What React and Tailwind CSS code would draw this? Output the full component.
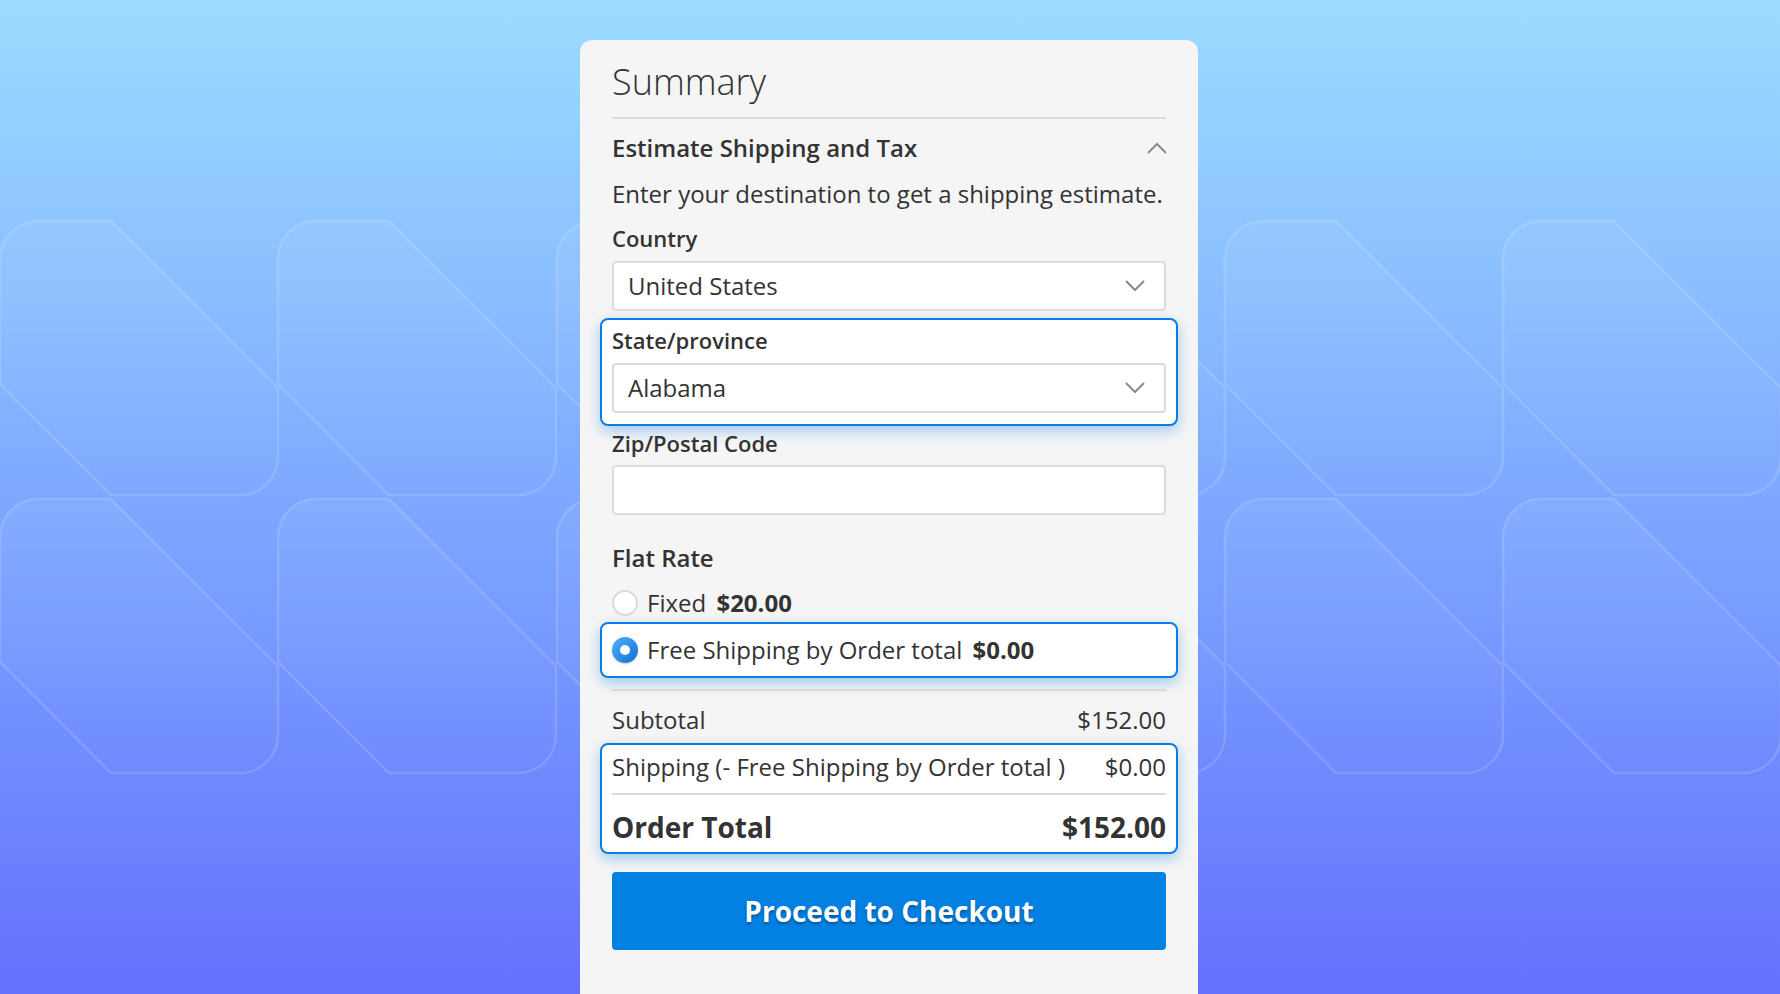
import React from 'react'

const LEFT_TILES = [0, 278, 557]
const RIGHT_TILES = [947, 1225, 1503]
const ROWS = [221, 499]

function tilePath(x, y, w, h = 274, a = 111, r = 38) {
  return `M${x} ${y + r}A${r} ${r} 0 0 1 ${x + r} ${y}L${x + a} ${y}L${x + w} ${y + w - a}L${x + w} ${y + h - r}A${r} ${r} 0 0 1 ${x + w - r} ${y + h}L${x + a} ${y + h}L${x} ${y + h - a}Z`
}

function Backdrop() {
  const tiles = []
  ROWS.forEach((y) => {
    LEFT_TILES.forEach((x) => tiles.push(tilePath(x, y, 278)))
    RIGHT_TILES.forEach((x) => tiles.push(tilePath(x, y, 278)))
  })
  return (
    <svg className="absolute inset-0" width="1780" height="994" viewBox="0 0 1780 994">
      <defs>
        <linearGradient id="tileFill" x1="0" y1="0" x2="0" y2="1">
          <stop offset="0" stopColor="#ffffff" stopOpacity="0.06" />
          <stop offset="1" stopColor="#ffffff" stopOpacity="0" />
        </linearGradient>
      </defs>
      {tiles.map((d, i) => (
        <path key={i} d={d} fill="url(#tileFill)" stroke="#ffffff" strokeOpacity="0.14" strokeWidth="2.5" />
      ))}
    </svg>
  )
}

function Chevron({ up }) {
  return (
    <svg width="20" height="12" viewBox="0 0 20 12" fill="none">
      <path
        d={up ? 'M1 11L10 2L19 11' : 'M1 1L10 10L19 1'}
        stroke="#8a8a8a"
        strokeWidth="2"
      />
    </svg>
  )
}

function Select({ value }) {
  return (
    <div className="flex items-center justify-between h-[50px] bg-white border-2 border-[#dcdcdc] rounded-[4px] pl-[14px] pr-[19px]">
      <span className="text-[24px] leading-[32px]">{value}</span>
      <Chevron />
    </div>
  )
}

function Label({ children }) {
  return <div className="text-[22px] font-semibold leading-[30px]">{children}</div>
}

const focusBox = 'bg-white border-2 border-[#0a7de3] rounded-[8px] -mx-3 px-[10px] shadow-[0_5px_14px_rgba(10,125,227,0.35)]'

export default function App() {
  return (
    <div className="relative w-full h-[994px] overflow-hidden bg-gradient-to-b from-[#9ddcff] to-[#6570fc] font-['Open_Sans','Noto_Sans',sans-serif] text-[#333333]">
      <Backdrop />

      <div className="relative flex justify-center pt-[40px]">
        <div className="w-[618px] mr-[2px] h-[954px] bg-[#f5f5f5] rounded-t-[12px] px-8 pt-5 flex flex-col">

          {/* ── Title ─────────────────────────── */}
          <h1 className="text-[36px] font-light leading-[43px]">Summary</h1>
          <div className="mt-[14px] h-[2px] bg-[#dadada]" />

          {/* ── Estimate block ────────────────── */}
          <div className="mt-[13px] h-[32px] flex items-center justify-between">
            <span className="text-[24px] font-semibold">Estimate Shipping and Tax</span>
            <span className="-mr-[1px]">
              <Chevron up />
            </span>
          </div>
          <p className="mt-[14px] text-[24px] leading-[32px] whitespace-nowrap">
            Enter your destination to get a shipping estimate.
          </p>

          <div className="mt-[13px]">
            <Label>Country</Label>
          </div>
          <div className="mt-[8px]">
            <Select value="United States" />
          </div>

          <div className={`mt-[7px] pt-[5px] pb-[11px] ${focusBox}`}>
            <Label>State/province</Label>
            <div className="mt-[8px]">
              <Select value="Alabama" />
            </div>
          </div>

          <div className="mt-[2px]">
            <Label>Zip/Postal Code</Label>
          </div>
          <div className="mt-[7px] h-[50px] bg-white border-2 border-[#dcdcdc] rounded-[4px]" />

          {/* ── Shipping methods ──────────────── */}
          <div className="mt-[28px] text-[24px] font-semibold leading-[30px]">Flat Rate</div>

          <div className="mt-[14px] h-[32px] flex items-center gap-[9px] text-[24px]">
            <span className="w-[26px] h-[26px] rounded-full bg-white border-2 border-[#dadada]" />
            <span>
              Fixed <strong className="font-bold ml-1">$20.00</strong>
            </span>
          </div>

          <div className={`mt-[3px] py-[10px] flex items-center gap-[9px] ${focusBox}`}>
            <span className="w-[26px] h-[26px] rounded-full bg-gradient-to-br from-[#4fb0fa] to-[#0a6fd6] flex items-center justify-center shadow-[0_1px_2px_rgba(0,0,0,0.2)]">
              <span className="w-[10px] h-[10px] rounded-full bg-white" />
            </span>
            <span className="text-[24px] leading-[32px]">
              Free Shipping by Order total <strong className="font-bold ml-1">$0.00</strong>
            </span>
          </div>

          {/* ── Totals ────────────────────────── */}
          <div className="mt-[11px] h-[2px] bg-[#dadada]" />

          <div className="mt-[13px] flex justify-between text-[24px] leading-[32px]">
            <span>Subtotal</span>
            <span>$152.00</span>
          </div>

          <div className={`mt-[7px] pt-[6px] pb-[5px] ${focusBox}`}>
            <div className="flex justify-between text-[24px] leading-[32px]">
              <span>Shipping (- Free Shipping by Order total )</span>
              <span>$0.00</span>
            </div>
            <div className="mt-[10px] h-[2px] bg-[#dadada]" />
            <div className="mt-[12px] flex justify-between text-[28px] font-bold leading-[40px]">
              <span>Order Total</span>
              <span>$152.00</span>
            </div>
          </div>

          <button className="mt-[18px] h-[78px] bg-[#0381e2] rounded-[4px] text-white text-[28px] font-bold [text-shadow:0_2px_3px_rgba(0,0,0,0.35)]">
            Proceed to Checkout
          </button>
        </div>
      </div>
    </div>
  )
}
